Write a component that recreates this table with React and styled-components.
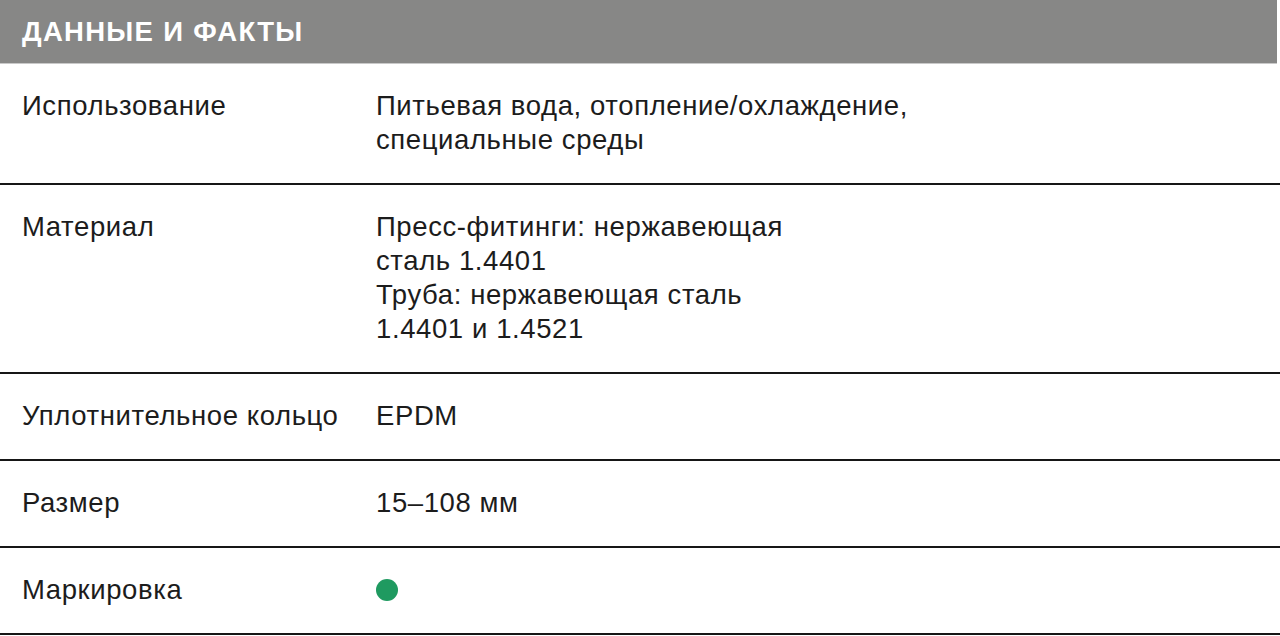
import styled, { createGlobalStyle } from 'styled-components'

const GlobalStyle = createGlobalStyle`
    body {
        margin: 0;
        background: #ffffff;
        font-family: 'Liberation Sans', Arial, sans-serif;
    }
`

const rows = [
    { label: 'Использование', value: ['Питьевая вода, отопление/охлаждение,', 'специальные среды'] },
    { label: 'Материал', value: ['Пресс-фитинги: нержавеющая', 'сталь 1.4401', 'Труба: нержавеющая сталь', '1.4401 и 1.4521'] },
    { label: 'Уплотнительное кольцо', value: ['EPDM'] },
    { label: 'Размер', value: ['15–108 мм'] },
    { label: 'Маркировка', dot: '#1f9a60' },
]

// LOGIC
export default function App() {
    return (
        <>
            <GlobalStyle />
            <Table>
                <Header>
                    <h1>ДАННЫЕ И ФАКТЫ</h1>
                </Header>
                {rows.map(row => (
                    <Row key={row.label}>
                        <Label>{row.label}</Label>
                        <Value>
                            {row.dot
                                ? <Dot color={row.dot} />
                                : row.value.map(line => <span key={line}>{line}</span>)}
                        </Value>
                    </Row>
                ))}
            </Table>
        </>
    )
}

//UI
const Table = styled.div`
    width: 1280px;
    display: flex;
    flex-direction: column;
`
const Header = styled.div`
    height: 64px;
    width: 1277px;
    background: #878786;
    border-bottom: 1px solid #c9c9c9;
    box-sizing: border-box;
    display: flex;
    align-items: center;
    padding-left: 22px;

        h1{
            margin: 0;
            font-family: 'Liberation Sans', Arial, sans-serif;
            font-weight: 700;
            font-size: 27.5px;
            letter-spacing: 1.3px;
            color: #ffffff;
        }
`
const Row = styled.div`
    display: grid;
    grid-template-columns: 354px 1fr;
    padding: 25px 0 26px 22px;
    border-bottom: 2px solid #161616;
    font-size: 27.5px;
    line-height: 34px;
    letter-spacing: 0.6px;
    color: #1c1c1c;
`
const Label = styled.div`
    font-weight: 400;
    white-space: nowrap;
`
const Value = styled.div`
    display: flex;
    flex-direction: column;
    min-height: 34px;
    justify-content: center;
`
const Dot = styled.div`
    width: 22px;
    height: 22px;
    border-radius: 50%;
    background: ${props => props.color};
`
